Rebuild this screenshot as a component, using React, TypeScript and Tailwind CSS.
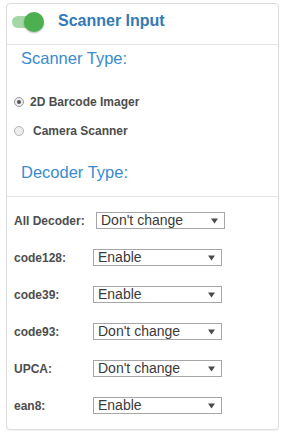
import React from "react";

function Arrow() {
  return (
    <svg width="7" height="6" viewBox="0 0 7 6" className="block">
      <path d="M0 0.5 L7 0.5 L3.5 5.5 Z" fill="#4a4a4a" />
    </svg>
  );
}

function Select({ value }: { value: string }) {
  return (
    <div className="flex items-center justify-between w-[129px] h-[17px] border border-[#a6a6a6] bg-white pl-[4px] pr-[6px]">
      <span className="text-[14px] leading-[15px] text-[#3a3a3a]">{value}</span>
      <Arrow />
    </div>
  );
}

function Row({ label, value, labelW }: { label: string; value: string; labelW: string }) {
  return (
    <div className="flex items-center h-[37px] pl-[7px]">
      <div className={`${labelW} text-[12px] font-bold text-[#4d4d4d] leading-[14px]`}>{label}</div>
      <Select value={value} />
    </div>
  );
}

export default function App() {
  return (
    <div
      className="w-[286px] h-[436px] bg-white pt-[3px] pl-[6px]"
      style={{ fontFamily: '"Liberation Sans", Arial, sans-serif' }}
    >
      <div className="w-[273px] h-[427px] border border-[#dddddd] rounded-[4px] shadow-[0_1px_1px_rgba(0,0,0,0.06)] bg-white">
        {/* header */}
        <div className="h-[41px] border-b border-[#e5e5e5] flex items-start pt-[8px] pl-[5px]">
          <div className="relative w-[32px] h-[20px]">
            <div className="absolute left-0 top-[4px] w-[28px] h-[12px] rounded-full bg-[#a3d7a5]" />
            <div className="absolute left-[12px] top-0 w-[20px] h-[20px] rounded-full bg-[#4caf50] shadow-[0_1px_2px_rgba(0,0,0,0.3)]" />
          </div>
          <div className="ml-[14px] h-[20px] flex items-center text-[16px] font-bold text-[#337ab7] leading-[18px] -mt-[1px]">
            Scanner Input
          </div>
        </div>

        {/* Scanner type */}
        <div className="h-[27px] pl-[14px] text-[16.5px] leading-[27px] text-[#3a8bd0]">
          Scanner Type:
        </div>
        <div className="mt-[15px]">
          <div className="flex items-center h-[29px] pl-[7px]">
            <div className="w-[10px] h-[10px] rounded-full border border-[#9a9a9a] bg-[#eeeeee] flex items-center justify-center">
              <div className="w-[4px] h-[4px] rounded-full bg-[#555]" />
            </div>
            <span className="ml-[6px] text-[12px] font-bold text-[#4d4d4d] leading-[14px]">2D Barcode Imager</span>
          </div>
          <div className="flex items-center h-[29px] pl-[7px]">
            <div className="w-[10px] h-[10px] rounded-full border border-[#b5b5b5] bg-[#ececec]" />
            <span className="ml-[9px] text-[12px] font-bold text-[#4d4d4d] leading-[14px]">Camera Scanner</span>
          </div>
        </div>

        {/* Decoder type */}
        <div className="pt-[14px] pb-[10px] border-b border-[#e5e5e5]">
          <div className="h-[27px] pl-[14px] text-[16.5px] leading-[27px] text-[#3a8bd0]">Decoder Type:</div>
        </div>

        <div className="pt-[5px]">
          <Row label="All Decoder:" value="Don't change" labelW="w-[82px]" />
          <Row label="code128:" value="Enable" labelW="w-[79px]" />
          <Row label="code39:" value="Enable" labelW="w-[79px]" />
          <Row label="code93:" value="Don't change" labelW="w-[79px]" />
          <Row label="UPCA:" value="Don't change" labelW="w-[79px]" />
          <Row label="ean8:" value="Enable" labelW="w-[79px]" />
        </div>
      </div>
    </div>
  );
}
